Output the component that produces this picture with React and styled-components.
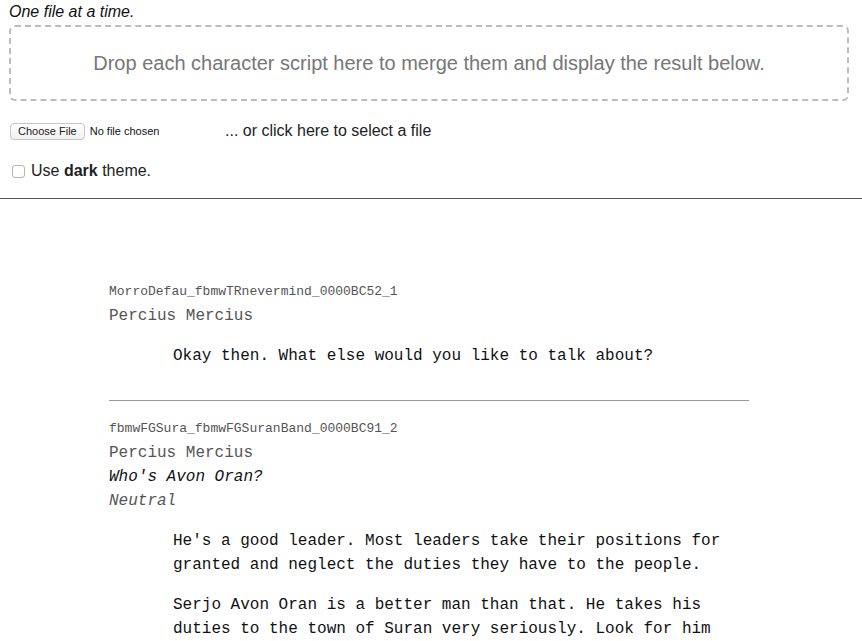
import React from "react";
import styled, { createGlobalStyle } from "styled-components";

const GlobalStyle = createGlobalStyle`
  body {
    margin: 0;
    background: #fff;
    color: #222;
    font-family: "Liberation Sans", Arial, sans-serif;
  }
`;

const Header = styled.div`
  padding: 0 13px 0 9px;
`;

const Note = styled.div`
  font-style: italic;
  font-size: 16px;
  line-height: 18px;
  padding-top: 3px;
  color: #111;
`;

const DropZone = styled.div`
  margin-top: 4px;
  height: 76px;
  box-sizing: border-box;
  border: 2px dashed #bcbcbc;
  border-radius: 6px;
  display: flex;
  align-items: center;
  justify-content: center;
  font-size: 20px;
  color: #777;
`;

const FileRow = styled.div`
  margin-top: 18px;
  height: 24px;
  display: flex;
  align-items: center;
  font-size: 16px;
`;

const FilePicker = styled.div`
  width: 216px;
  display: flex;
  align-items: center;
  gap: 5px;
  font-size: 11px;
  color: #111;
`;

const ChooseButton = styled.span`
  margin-left: 1px;
  height: 17px;
  padding: 0 7px;
  box-sizing: border-box;
  display: inline-flex;
  align-items: center;
  border: 1px solid #c6c6c6;
  border-radius: 4px;
  background: linear-gradient(#ffffff, #f1f1f1);
  font-size: 11px;
  color: #222;
`;

const SelectLink = styled.span`
  color: #222;
`;

const CheckRow = styled.label`
  margin-top: 16px;
  height: 24px;
  display: flex;
  align-items: center;
  gap: 6px;
  font-size: 16px;
`;

const Box = styled.span`
  margin-left: 3px;
  width: 11px;
  height: 11px;
  border: 1px solid #b4b4b4;
  border-radius: 3px;
  background: #fff;
`;

const Rule = styled.hr`
  margin: 15px 0 0;
  border: 0;
  border-top: 1px solid #555;
`;

const Script = styled.div`
  width: 640px;
  padding: 81px 4px 0 0;
  margin: 0 auto;
  font-family: "Liberation Mono", "Courier New", monospace;
  font-size: 16px;
  line-height: 24px;
`;

const Entry = styled.div``;

const LineId = styled.div`
  font-size: 13px;
  color: #555;
`;

const Speaker = styled.div`
  color: #555;
`;

const Prompt = styled.div`
  font-style: italic;
  color: #111;
`;

const Emotion = styled.div`
  font-style: italic;
  color: #555;
`;

const Line = styled.p`
  margin: 16px 0;
  padding-left: 64px;
  color: #111;
`;

const Divider = styled.hr`
  margin: 32px 0 16px;
  border: 0;
  border-top: 1px solid #999;
`;

const entries = [
  {
    id: "MorroDefau_fbmwTRnevermind_0000BC52_1",
    speaker: "Percius Mercius",
    lines: ["Okay then. What else would you like to talk about?"],
  },
  {
    id: "fbmwFGSura_fbmwFGSuranBand_0000BC91_2",
    speaker: "Percius Mercius",
    prompt: "Who's Avon Oran?",
    emotion: "Neutral",
    lines: [
      "He's a good leader. Most leaders take their positions for granted and neglect the duties they have to the people.",
      "Serjo Avon Oran is a better man than that. He takes his duties to the town of Suran very seriously. Look for him around the Tradehouse.",
    ],
  },
];

export default function App() {
  return (
    <>
      <GlobalStyle />
      <Header>
        <Note>One file at a time.</Note>
        <DropZone>
          Drop each character script here to merge them and display the result below.
        </DropZone>
        <FileRow>
          <FilePicker>
            <ChooseButton>Choose File</ChooseButton>
            <span>No file chosen</span>
          </FilePicker>
          <SelectLink>... or click here to select a file</SelectLink>
        </FileRow>
        <CheckRow>
          <Box />
          <span>
            Use <b>dark</b> theme.
          </span>
        </CheckRow>
      </Header>
      <Rule />
      <Script>
        {entries.map((e, i) => (
          <Entry key={e.id}>
            {i > 0 && <Divider />}
            <LineId>{e.id}</LineId>
            <Speaker>{e.speaker}</Speaker>
            {e.prompt && <Prompt>{e.prompt}</Prompt>}
            {e.emotion && <Emotion>{e.emotion}</Emotion>}
            {e.lines.map((l) => (
              <Line key={l}>{l}</Line>
            ))}
          </Entry>
        ))}
      </Script>
    </>
  );
}
